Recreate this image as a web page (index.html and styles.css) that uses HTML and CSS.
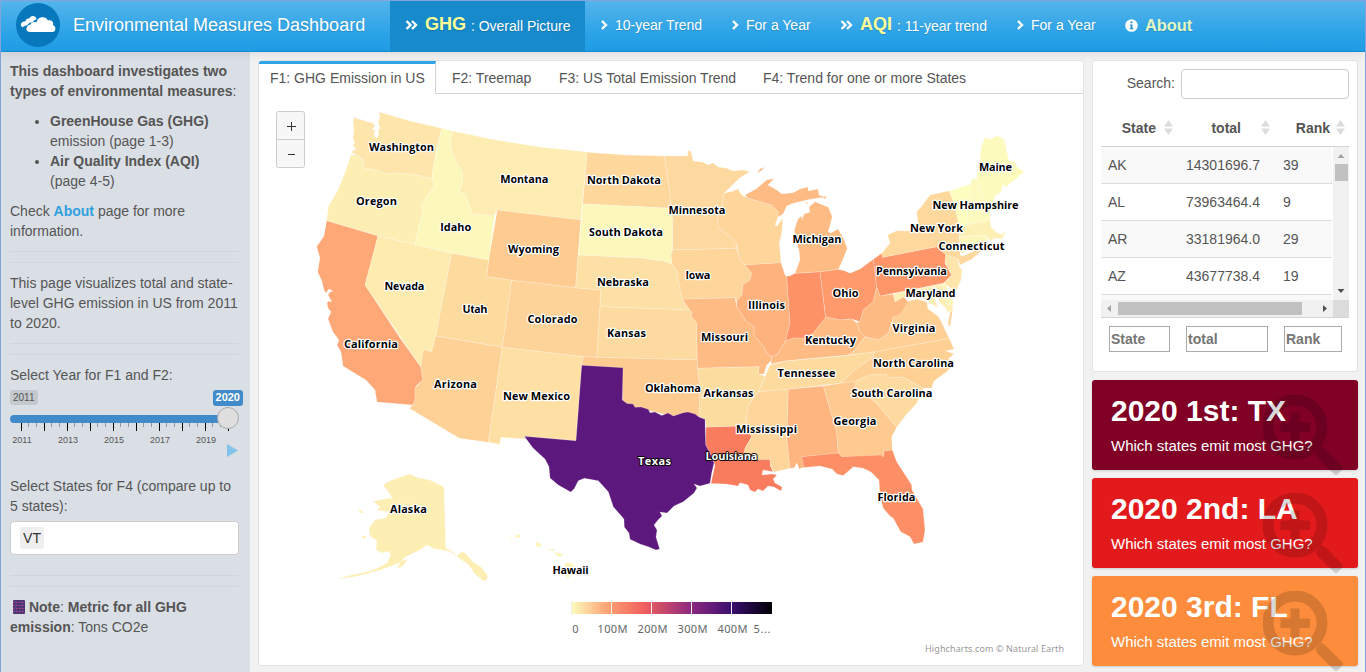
FILE: index.html
```html
<!DOCTYPE html>
<html lang="en">
<head>
<meta charset="utf-8">
<title>Environmental Measures Dashboard</title>
<link rel="stylesheet" href="styles.css">
</head>
<body>
<svg class="defs" width="0" height="0">
  <symbol id="chev" viewBox="0 0 8 10"><path d="M2 1l4 4-4 4" fill="none" stroke="#fff" stroke-width="2.4"/></symbol>
  <symbol id="dchev" viewBox="0 0 13 10"><path d="M1.500 1l4 4-4 4M7 1l4 4-4 4" fill="none" stroke="#fff" stroke-width="2.4"/></symbol>
  <symbol id="magnify" viewBox="0 0 80 80"><circle cx="32" cy="32" r="27" fill="none" stroke="#000" stroke-width="11"/><path d="M27.500 17.500h9V27.500H47v9.500H36.500V47h-9V37H17.500V27.500h10z"/><path d="M53 58l5-6.500q3 1 5 3.500l16 16q2 2 0 4l-4 4q-2 2-4 0L55 63q-2-2-2-5z"/></symbol>
  <symbol id="sort" viewBox="0 0 9 15"><path d="M4.500 0L9 6.500H0zM0 8.500h9L4.500 15z" fill="#dcdcdc"/></symbol>
</svg>
<header class="navbar">
  <svg class="logo" width="44" height="44" viewBox="0 0 44 44"><circle cx="22" cy="22" r="22" fill="#0878bd"/><path d="M6.500 24.300C3.500 22.500 4.500 18.500 9.500 18.300 10 16 11.500 15.200 13.200 15.700 14.500 12 20 12.300 20.500 16.300 18.500 17 17.500 18 17 19.300 14 19.300 12.500 20.300 11.500 22 10 22.500 8 23 6.500 24.300Z" fill="#fff"/><path d="M13.500 29C9 28.500 9.500 22.500 14.500 21.500 15.500 19 18.500 18.500 20.500 19.500 21.500 13 30 12.500 32 17.500 35.500 16.500 38 19 37 22 40.500 23.500 40 28.500 37 29Z" fill="#fff"/></svg>
  <div class="title">Environmental Measures Dashboard</div>
  <nav class="nav">
    <a class="item active w1"><svg width="13" height="10"><use href="#dchev"/></svg><span><b class="big">GHG</b> <span class="sub">: Overall Picture</span></span></a>
    <a class="item w2"><svg width="8" height="10"><use href="#chev"/></svg><span>10-year Trend</span></a>
    <a class="item w3"><svg width="8" height="10"><use href="#chev"/></svg><span>For a Year</span></a>
    <a class="item w4"><svg width="13" height="10"><use href="#dchev"/></svg><span><b class="big">AQI</b> <span class="sub">: 11-year trend</span></span></a>
    <a class="item w3"><svg width="8" height="10"><use href="#chev"/></svg><span>For a Year</span></a>
    <a class="item w5"><svg width="13" height="13" viewBox="0 0 13 13"><circle cx="6.500" cy="6.500" r="6.300" fill="#fff"/><path d="M5.500 2.500h2v1.700h-2zM4.800 5.400h2.700v3.700h.8v1.200H4.800V9.100h.8V6.500h-.8z" fill="#2a8fd0"/></svg><b class="about">About</b></a>
  </nav>
</header>
<div class="body">
  <aside class="sidebar">
    <p><b>This dashboard investigates two types of environmental measures</b>:</p>
    <ul><li><b>GreenHouse Gas (GHG)</b><br>emission (page 1-3)</li><li><b>Air Quality Index (AQI)</b><br>(page 4-5)</li></ul>
    <p class="check">Check <b class="link">About</b> page for more information.</p>
    <div class="rule r1"></div><div class="rule r2"></div>
    <p>This page visualizes total and state-level GHG emission in US from 2011 to 2020.</p>
    <div class="rule r3"></div><div class="rule r2"></div>
    <p class="lbl">Select Year for F1 and F2:</p>
    <div class="badges"><span class="min">2011</span><span class="cur">2020</span></div>
    <svg class="slider" width="239" height="56" viewBox="10 407 239 56">
      <rect x="10" y="415" width="218" height="8" rx="4" fill="#428bca"/>
      <path d="M21.500 423v8M44.500 423v8M67.500 423v8M90.500 423v8M113.500 423v8M136.500 423v8M159.500 423v8M182.500 423v8M205.500 423v8M228.500 423v8" stroke="#000"/>
      <path d="M28.500 423v4M36.500 423v4M51.500 423v4M59.500 423v4M74.500 423v4M82.500 423v4M97.500 423v4M105.500 423v4M120.500 423v4M128.500 423v4M143.500 423v4M151.500 423v4M166.500 423v4M174.500 423v4M189.500 423v4M197.500 423v4M212.500 423v4M220.500 423v4" stroke="#999"/>
      <g class="ticks"><text x="22" y="443">2011</text><text x="68" y="443">2013</text><text x="114" y="443">2015</text><text x="160" y="443">2017</text><text x="206" y="443">2019</text></g>
      <circle cx="228" cy="418" r="10.500" fill="#dedede" stroke="#aaa"/>
      <path d="M227 444l11 6.500-11 6.500z" fill="#82c2eb"/>
    </svg>
    <p class="states">Select States for F4 (compare up to 5 states):</p>
    <div class="select"><span>VT</span></div>
    <div class="rule r4"></div><div class="rule r2"></div>
    <p class="note"><svg width="13" height="14" viewBox="0 0 13 14"><rect x="1" width="12" height="14" rx="1" fill="#51346f"/><path d="M1 2.500h12M1 5.500h12M1 8.500h12M1 11.500h12" stroke="#b44a93" stroke-dasharray="1.500 1.500"/><path d="M3.500 1v12M9.500 1v12" stroke="#4b57a8" stroke-dasharray="1 2"/></svg> <b>Note</b>: <b>Metric for all GHG emission</b>: Tons CO2e</p>
  </aside>
  <main class="card chart">
    <div class="tabs"><div class="tab on">F1: GHG Emission in US</div><div class="tab t2">F2: Treemap</div><div class="tab t3">F3: US Total Emission Trend</div><div class="tab t4">F4: Trend for one or more States</div></div>
    <svg class="map" width="824" height="571" viewBox="259 94 824 571">
      <defs><linearGradient id="magma"><stop offset="0" stop-color="#fcfdbf"/><stop offset=".18" stop-color="#fea473"/><stop offset=".36" stop-color="#f1605d"/><stop offset=".6" stop-color="#8c2981"/><stop offset=".8" stop-color="#3b0f70"/><stop offset="1" stop-color="#000004"/></linearGradient></defs>
      <g class="land">
        <path fill="#fee5ac" d="M354 117L358 119 363 120 368 122 373 123 375 126 372 129 375 130 374 136 377 138 379 134 378 131 380 128 378 122 380 117 379 112 410 121 441.700 128.300 436 153 433 169 432 179 421 176 410 174 395 173 387 174 380 171.500 370 169 364 168 363 160 357 155 352 153 353 150 356 150 353 145 355 143 353 139 354 130 353 122Z"/>
        <path fill="#fdefb4" d="M351 155L357 155 363 160 364 168 370 169 380 171.500 387 174 395 173 410 174 421 176 432 179 435 185 428 195 422 205 423 210 415 244.500 378 236 326.700 220.700 328 207 338 190 345 173Z"/>
        <path fill="#fda876" d="M326.700 220.700L378 236 365 285 400 338 420.700 366.700 423 380 417 385 415 388 415 400 413 405 377 402 375 390 366 380 356 374 343 366 341 352 337 345 339 340 333 332 328 319 331 312 328 308 327 303 329 301 332 302 328 295 330 292 333 291 329 289 326 293 324 290 322 281 317.700 272 320 258 316.700 246.700 324 236Z"/>
        <path fill="#feebb0" d="M378 236L415 244.500 451.700 253.300 435.700 336 431.700 351.700 423.500 349.500 422.500 358 420.700 366.700 365 285Z"/>
        <path fill="#fcf8bc" d="M441.700 128.300L452.700 131 450 143 453 155 458 165 463 173 463 182 459 193 465 193 469 204 473 215 483 214 492 216 495 213 488.700 260 451.700 253.300 415 244.500 423 210 422 205 428 195 435 185 432 179 433 169Z"/>
        <path fill="#fdedb2" d="M452.700 131L493 139.500 540 147 587.300 152 580.700 220 497.300 210 495 214 492 216 483 214 473 215 469 204 465 193 459 193 463 182 463 173 458 165 453 155 450 143Z"/>
        <path fill="#fecb91" d="M497.300 210L580.700 220 575.700 287.700 511.700 280.300 486.700 276.700 488.700 260Z"/>
        <path fill="#fddb9f" d="M451.700 253.300L488.700 260 486.700 276.700 511.700 280.300 502.300 347.300 435.700 336Z"/>
        <path fill="#fed399" d="M511.700 280.300L575.700 287.700 600.700 290 600 306.700 596.700 357.300 583.300 356.700 502.300 347.300Z"/>
        <path fill="#fed196" d="M435.700 336L502.300 347.300 488.300 442.300 459.300 438.300 409.300 408.300 413 405 415 400 415 388 423 380 420.700 366.700 423.500 349.500 431.700 351.700Z"/>
        <path fill="#fee0a5" d="M502.300 347.300L583.300 356.700 581.700 365.300 576 440.700 524.300 436.300 525 439 501 437.300 499.700 444.300 488.300 442.300Z"/>
        <path fill="#fed79c" d="M587.300 152.300L625 155 664.300 156 668 180 670 193 671 208.300 582.700 204Z"/>
        <path fill="#fcf8bb" d="M582.700 204L671 208.300 670 213 672.700 218 672.700 250 671 255 672 264.300 663 260.700 653 260 645 258.300 578.300 255Z"/>
        <path fill="#fde0a5" d="M578.300 255L645 258.300 653 260 663 260.700 672 264.300 676.700 270 679.300 286.700 682.300 299.300 690 310 600 306.700 600.700 290 575.700 287.700Z"/>
        <path fill="#fddba0" d="M600 306.700L690 310 692 313 691 316 696.700 323.300 697.300 360 596.700 357.300Z"/>
        <path fill="#fecb91" d="M583.300 356.700L596.700 357.300 697.300 360 697.700 368.300 700 390 699 416.700 690 413 673 416 623 405 622 369 581.700 365.300Z"/>
        <path fill="#fdd99f" d="M664.300 156L687.700 156 687.700 150 691 152 693.300 161 703.300 162.300 708 165 713.300 163 718 167 726.700 168.300 733.300 171 743 170 750 171.500 740 177.700 724 193.300 722.300 206.700 717.300 213.300 718.300 228.300 730 236 736.700 243.300 736.700 248.300 672.700 250 672.700 218 670 213 671 208.300 670 193 668 180Z"/>
        <path fill="#fed59b" d="M724 193.300L733.300 191 738 189 741.700 195 748.300 198.300 771.700 205 778.300 211.700 778 217 775 225 777 226 783 218 781.700 233.300 779.300 243.300 781 262.700 745 265 740 260 738 252 736.700 243.300 730 236 718.300 228.300 717.300 213.300 722.300 206.700Z"/>
        <path fill="#fed59b" d="M672.700 250L736.700 248.300 740 260 745 265 751.700 273.300 750 280 742.700 285 742 295 736.700 300.700 735 297.700 682.300 299.300 679.300 286.700 676.700 270 672 264.300 671 255Z"/>
        <path fill="#febb84" d="M682.300 299.300L735 297.700 736.700 306.700 746.700 321.700 754.300 326.700 754 335 765 348.300 766.700 353 771.700 356.700 771 361 766.700 365 764 374 758.300 374 759 366.700 697.700 368.300 697.300 360 696.700 323.300 691 316 692 313Z"/>
        <path fill="#feb27d" d="M745 265L781 262.700 785 275 786.700 276.500 790 323.300 785.700 340.700 780 350 778 354 771.700 356.700 766.700 353 765 348.300 754 335 754.300 326.700 746.700 321.700 736.700 306.700 736.700 300.700 742 295 742.700 285 750 280 751.700 273.300Z"/>
        <path fill="#fe9267" d="M786.700 276L790 276 795 273.300 820 271.700 825.700 318 818.300 326.700 813.300 333.300 803.300 338.300 794 338 785.700 340.700 790 323.300Z"/>
        <path fill="#fe9a6c" d="M820 271.700L838.300 269.300 845 271 850 273.300 860 269 873.300 259.300 876.700 286.700 873.300 301.700 863.300 310 860 321.700 851.700 319 840 320 825.700 317Z"/>
        <path fill="#febb84" d="M795 273.300L800 260 799 250 796.700 243.300 794.300 230 798 219 801.700 216 802 220 804 214 810 212 809 207 815 201.700 828.300 207.300 832.300 216.700 830 225 828 232 831 233 838 229 843.300 238.300 847.300 248.300 842.700 260 838.300 269.300 820 271.700ZM745 195L756 189 766.700 180 774 178.500 768 185 776.700 190 782 194 793 192.700 800 189 808 187 808 191 818 189 819 195 825 197 810 199.300 793 203.300 786.700 206 783 214 778 217 778.300 211.700 771.700 205 748.300 198.300ZM757 173L760 169 765 167 761 171ZM823 197l3-1v3l-3-1zM806 202l2 1-2 1z"/>
        <path fill="#febb84" d="M785.700 340.700L794 338 803.300 338.300 813.300 333.300 818.300 326.700 825.700 317 840 320 851.700 319 856.700 322.700 860 331.700 865 336.700 853.300 351.700 848.300 355 786.700 360.700 771 364 771.700 356.700 778 354 780 350Z"/>
        <path fill="#fddb9f" d="M770 365L786.700 361 845 355.700 875 351.700 871.700 358.300 855 370 840 383.300 788.300 389.300 758.300 391.700 765 376.700Z"/>
        <path fill="#fddc9f" d="M697.700 368.300L759 366.700 758.300 374 765 376 758.300 391.700 748.300 405 746.700 416.700 746 426 706.700 427.300 705 419.300 699 416.700 700 390Z"/>
        <path fill="#f97c5f" d="M706 427.300L746 426 751.700 436.700 745 448.300 743.300 459.300 770 459.300 770.700 466.700 773 471.700 763 470 762 475 772 474 777 475 773 479 775 483 782 487 781 491 774 487 768 486 763 491 758 489 755 492 750 490 748 485 740 482.700 738 486 726 484 711 483.500 715 465 710 453 705.700 445Z"/>
        <path fill="#fed69c" d="M758.300 391.700L788.300 389.300 787 440 790 468.300 774 472 770.700 466.700 770 459.300 743.300 459.300 745 448.300 751.700 436.700 746 426 746.700 416.700 748.300 405Z"/>
        <path fill="#feb57f" d="M788.300 389.300L823.300 386 836.700 431.700 838.300 453.300 801.700 456.700 805 466.700 799 469 797 463 794 468 790 468.300 787 440Z"/>
        <path fill="#feca8f" d="M823.300 386L840 383.300 856.700 380.700 855 386 876.700 403.300 896.700 427.300 891.700 436.700 892.300 450 884.300 451 883.300 457.300 841.700 456.700 838.300 453.300 836.700 431.700Z"/>
        <path fill="#fd8f67" d="M801.700 456.700L838.300 453 841.700 456.700 881.700 455 883.300 457.300 884.300 451 892.300 450 896.700 461.700 911.700 485 912 490 923 509 925 530 923 542 914 544 910 536.700 900.700 531.700 893.300 518.300 890 516 883.300 508.300 880 496.700 879 480 871 472 863.300 468.300 853.300 466.700 843.300 475.500 837 474 832 469 820 466 804 467.500Z"/>
        <path fill="#fddba0" d="M855 386L856 381 868.300 375 885 374 890 377.700 903.300 377.300 923.300 388.300 916.700 403.300 906 415 896.700 427.300 876.700 403.300Z"/>
        <path fill="#fed094" d="M875 351.700L949.300 338.300 954 349 946 351 954 354 948 359 955 361 951 367 946.700 371.700 934 381 931.700 387.700 923.300 388.300 903.300 377.300 890 377.700 885 374 868.300 375 856 381 840 383.300 855 370 871.700 358.300Z"/>
        <path fill="#fed096" d="M848.300 355L853.300 351.700 865 336.700 870 338.300 878.300 340 888.300 333.300 893.300 316.700 906.700 301.700 916.700 299 926.700 301.700 928 309 938 316 942 323 946 332 949.300 338.300 875 351.700ZM950 313l3-5-3 19-2-3z"/>
        <path fill="#feba83" d="M876.700 286.700L880 296 893.300 294 895 301.700 903.300 296.700 908.300 301.700 900 315 893.300 316.700 888.300 333.300 878.300 340 865 336.700 860 331.700 856.700 322.700 860 321.700 863.300 310 873.300 301.700Z"/>
        <path fill="#fe9669" d="M873.300 259.300L881.700 253.300 882.700 257.300 936.700 246.700 946 255 945 263.300 951.700 275 943.300 283.300 880 296 876.700 286.700Z"/>
        <path fill="#fed89d" d="M881.700 253.300L890 243.300 887.700 235 896.700 230.700 908 231 918.300 226 916.700 211.700 921 207 930 195 949.300 190.700 955 206.700 959 223.300 959.300 236.700 960 255 963 256 974 251 982 250 972 259 960 265 958.300 259 946 255 936.700 246.700 882.700 257.300Z"/>
        <path fill="#fdfdbf" d="M949.300 190.700L970.700 184.300 971 195 968 208 967 225 959 226 955 206.700Z"/>
        <path fill="#fcfabe" d="M970.700 184.300L972 179 976.700 179 983 200 990 210 990 220 967 225 968 208 971 195Z"/>
        <path fill="#fcfabd" d="M976.700 179L980 160 981 147 985 137.300 990 139.500 997.300 135.700 1004 139.300 1009 161 1015 161.700 1017 167 1024 171.700 1016 179 1010 183 1007 187 1003 185 1001 192 995 196 989 210 983 200Z"/>
        <path fill="#fdf0b5" d="M959 226L967 225 990 220 991 227 996 232 1003 235 1002 230 1005 234 1002 239 996 238 990 241 986 235 959.300 236.700Z"/>
        <path fill="#fcf6ba" d="M959.300 236.700L986 235 988 241 982 243 970 249 961 254Z"/>
        <path fill="#fee5ac" d="M946 255L958.300 259 959 266 962 270 961 280 956 291 952 289 944 283 951.700 275 945 263.300Z"/>
        <path fill="#fcf6ba" d="M942 284L946 283 948 292 954 304 947 305Z"/>
        <path fill="#fdefb4" d="M893.300 294L942 284 947 305 953 304 952 311 948 312 944 306 939 302 939 291 935 287 933 295 938 308 930 303 925 299 916.700 297 909 297 903.300 296.700 895 301.700Z"/>
        <path fill="#fdeeb3" d="M383 485L388 481.700 397 478 410 474 417 477.500 430 480 444 487 445.700 548 453 552 457 556 462 551 466 554 473 562 481 567 488 576 486 581 482 580 475 574 468 564 460 559 451 552 443 550 435 549 427 545 418 551 405 557 401 562 394 565 380 570 366 574 353 577 337 579 351 575 362 573 376 569 387 563 391 554 387 551 383 553 376 550 377 541 370 536 369 528 375 520 386 518 389 512 377 510 380 507 373 501 391 498 393 501 390 494ZM397 568l4-7 7-2-6 8zM357 508l8 5-4 0zM361 536l5 0-2 3z"/>
        <path fill="#fdf4b8" d="M509 538l3-1-2 2zM515 536l4-2 2 3-5 1zM535 543l3-1 4 4-5 1zM547 549l8 0-2 2zM555 552l8 2-3 3-4-2zM565 563l6 0 6 5-9 10-4-4z"/>
        <path fill="#5c187c" d="M581.700 365.300L623 367.700 622.300 400 627 403.500 633 404 635 407.300 641 407 648.300 409.300 650 412.700 655 412 661.700 415.500 668 413 673.300 416 683.300 412.700 688 412 695 414 699 417 705 419.300 705.700 445 710 453 714 463 711.700 473 710 483.300 700 486 694 484 697 488 694 493 683.300 501.700 674 506 667 513 660 512 662 516 658 520 654 525 657 530 656 537 659.700 549 656 550 648.300 546.700 640 544 630 539.300 629 533 624.300 527 624 519 613.300 506.700 608.300 491.700 598.300 480.700 584.300 478.300 578.300 480.700 574 489 570.700 492 558.300 485 550 478 549 466.700 545 459 533 448 524.300 436.300 576 440.700Z"/>
      </g>
      <g class="names">
        <text x="401.500" y="151" textLength="65">Washington</text><text x="376.500" y="205" textLength="41">Oregon</text><text x="455.700" y="231" textLength="31">Idaho</text><text x="524.300" y="183" textLength="48">Montana</text><text x="533.500" y="253" textLength="51">Wyoming</text><text x="404.500" y="290" textLength="40">Nevada</text><text x="475" y="313" textLength="25">Utah</text><text x="552.500" y="323" textLength="50">Colorado</text><text x="371" y="348" textLength="54">California</text><text x="624" y="184" textLength="74">North Dakota</text><text x="697" y="214" textLength="57">Minnesota</text><text x="626" y="236" textLength="74">South Dakota</text><text x="698" y="279" textLength="25">Iowa</text><text x="623" y="286" textLength="52">Nebraska</text><text x="626.500" y="337" textLength="39">Kansas</text><text x="724.500" y="341" textLength="47">Missouri</text><text x="766.500" y="309" textLength="37">Illinois</text><text x="673" y="392" textLength="56">Oklahoma</text><text x="455.500" y="388" textLength="43">Arizona</text><text x="536.500" y="400" textLength="67">New Mexico</text><text x="408.500" y="513" textLength="37">Alaska</text><text x="570.500" y="574" textLength="36">Hawaii</text><text x="766.500" y="433" textLength="61">Mississippi</text><text x="728.500" y="397" textLength="50">Arkansas</text><text x="806.500" y="377" textLength="58">Tennessee</text><text x="855" y="425" textLength="43">Georgia</text><text x="896.500" y="501" textLength="38">Florida</text><text x="892" y="397" textLength="81">South Carolina</text><text x="913.500" y="367" textLength="81">North Carolina</text><text x="830.500" y="344" textLength="51">Kentucky</text><text x="914" y="332" textLength="43">Virginia</text><text x="930.500" y="297" textLength="50">Maryland</text><text x="911.500" y="275" textLength="71">Pennsylvania</text><text x="845.500" y="297" textLength="26">Ohio</text><text x="817" y="243" textLength="49">Michigan</text><text x="936.500" y="232" textLength="53">New York</text><text x="975.500" y="209" textLength="86">New Hampshire</text><text x="971.500" y="250" textLength="66">Connecticut</text><text x="995.500" y="171" textLength="33">Maine</text>
        <text class="inv" x="654.500" y="465" textLength="33">Texas</text><text class="inv" x="731.500" y="460" textLength="52">Louisiana</text>
      </g>
      <rect x="571" y="602" width="201" height="12" fill="url(#magma)"/>
      <path d="M571.500 602v12M611.500 602v12M651.500 602v12M691.500 602v12M731.500 602v12" stroke="#eee"/>
      <g class="axis"><text x="575.500" y="633">0</text><text x="612.500" y="633" textLength="30">100M</text><text x="652.500" y="633" textLength="30">200M</text><text x="692.500" y="633" textLength="30">300M</text><text x="732.500" y="633" textLength="30">400M</text><text x="762" y="633" textLength="17">5...</text></g>
      <text class="credit" x="1064" y="652" textLength="139">Highcharts.com © Natural Earth</text>
      <g class="zoom"><rect x="276.500" y="111.500" width="28" height="56" rx="2"/><path d="M276.500 139.500h28"/><path class="sign" d="M287 126.500h9M291.500 122v9M288 154.500h7"/></g>
    </svg>
  </main>
  <aside class="right">
    <section class="card table">
      <label class="search">Search:<span class="input"></span></label>
      <div class="row head"><b>State</b><svg width="9" height="15"><use href="#sort"/></svg><b>total</b><svg width="9" height="15"><use href="#sort"/></svg><b>Rank</b><svg width="9" height="15"><use href="#sort"/></svg></div>
      <div class="scroller">
        <div class="rows"><div class="row"><span>AK</span><span>14301696.7</span><span>39</span></div><div class="row"><span>AL</span><span>73963464.4</span><span>9</span></div><div class="row"><span>AR</span><span>33181964.0</span><span>29</span></div><div class="row"><span>AZ</span><span>43677738.4</span><span>19</span></div><div class="row"></div></div>
        <svg width="16" height="153" viewBox="0 0 16 153"><path d="M0 0h16v153H0z" fill="#f1f1f1"/><path d="M2 17h13v17H2z" fill="#c1c1c1"/><path d="M4.500 11h7L8 7z" fill="#a3a3a3"/><path d="M4.500 142h7L8 146z" fill="#505050"/></svg>
      </div>
      <svg class="hbar" width="248" height="18" viewBox="0 0 248 18"><path d="M0 0h232v17H0z" fill="#f1f1f1"/><path d="M232 0h16v18h-16z" fill="#dcdcdc"/><path d="M17 2h184v13H17z" fill="#c1c1c1"/><path d="M0 17h248v1H0z" fill="#d4d4d4"/><path d="M10 5v7L6 8.500z" fill="#a3a3a3"/><path d="M222 5v7l4-3.500z" fill="#505050"/></svg>
      <div class="filters"><b class="f1">State</b><b class="f2">total</b><b class="f3">Rank</b></div>
    </section>
    <section class="box maroon"><h2>2020 1st: TX</h2><p>Which states emit most GHG?</p><svg class="mag" width="80" height="80"><use href="#magnify"/></svg></section>
    <section class="box red"><h2>2020 2nd: LA</h2><p>Which states emit most GHG?</p><svg class="mag" width="80" height="80"><use href="#magnify"/></svg></section>
    <section class="box orange"><h2>2020 3rd: FL</h2><p>Which states emit most GHG?</p><svg class="mag" width="80" height="80"><use href="#magnify"/></svg></section>
  </aside>
</div>
</body>
</html>
```
FILE: styles.css
```css
* { box-sizing: border-box; }
body { margin: 0; width: 1366px; height: 672px; overflow: hidden; border: 1px solid #82a3dc; border-bottom: 0; background: #f1f1f1; color: #555; font: 14px/20px "Liberation Sans", Arial, sans-serif; display: flex; flex-direction: column; }
.defs { display: none; }
p, h2, ul { margin: 0; }
svg { display: block; flex: none; }
.navbar { height: 51px; flex: none; display: flex; background: linear-gradient(#54b4eb, #2fa4e7 60%, #1d9ce5); border-bottom: 1px solid #178acc; box-shadow: 0 1px 10px rgba(0,0,0,.1); color: #fff; position: relative; text-shadow: 0 1px 1px rgba(0,0,0,.15); }
.logo { margin: 2px 13px 0 15px; }
.title { width: 317px; font-size: 18px; line-height: 48px; white-space: nowrap; }
.nav { display: flex; }
.item { display: flex; align-items: center; padding: 0 15px 3px; white-space: nowrap; gap: 7px; }
.active { background: #178acc; }
.w1 { width: 195px; } .w2 { width: 131px; } .w3 { width: 109px; } .w4 { width: 176px; } .w5 { width: 97px; }
.w5 svg { margin-top: 1px; }
.big { font-size: 18px; color: #ffff99; }
.sub { display: inline-block; transform: translateY(1px); margin-left: 1px; }
.about { font-size: 16.4px; color: #e3f7c3; }
.body { flex: 1; display: flex; min-height: 0; }
.sidebar { width: 249px; background: #dadfe5; padding: 9px 0 0 9px; }
.sidebar p { width: 232px; }
.sidebar ul { margin: 10px 0; padding-left: 40px; }
.link { color: #2f9fe0; }
.rule { width: 229px; border-top: 1px solid #d3d6d8; }
.r1 { margin-top: 10px; } .r2 { margin: 10px 0; } .r3 { margin-top: 10px; }
.lbl { margin-top: 10px; }
.badges { display: flex; justify-content: space-between; width: 233px; margin-top: 5px; height: 17px; font-size: 10px; line-height: 15px; }
.min { background: #c4c9ce; border-radius: 3px; padding: 0 3px; height: 15px; }
.cur { background: #428bca; color: #fff; font-weight: bold; font-size: 11px; border-radius: 3px; padding: 0 3px; height: 16px; }
.ticks { font-size: 9px; fill: #555; text-anchor: middle; }
.states { margin-top: 13px; }
.select { width: 229px; height: 34px; margin-top: 5px; background: #fff; border: 1px solid #ccc; border-radius: 4px; padding: 5px 9px; display: flex; }
.select span { width: 24px; height: 22px; line-height: 22px; text-align: center; color: #333; background: #efefef; border-radius: 3px; }
.r4 { margin-top: 20px; }
.note svg { display: inline-block; vertical-align: -2px; margin-left: 2px; }
.card { background: #fff; border: 1px solid #e2e2e2; border-radius: 3px; }
.chart { width: 826px; height: 606px; margin: 8px 0 0 8px; overflow: hidden; }
.tabs { height: 33px; display: flex; border-bottom: 1px solid #d4d4d4; line-height: 34px; white-space: nowrap; }
.on { width: 177px; height: 33px; border-top: 3px solid #2fa4e7; border-right: 1px solid #d4d4d4; background: #fff; padding-left: 11px; line-height: 28px; }
.t2 { margin-left: 16px; width: 107px; } .t3 { width: 204px; }
.land path { stroke: #fff; stroke-opacity: .25; stroke-width: .8; stroke-linejoin: round; }
.names { font: bold 11px "Open Sans", "Noto Sans", sans-serif; text-anchor: middle; fill: #000; stroke: #fff; stroke-width: 2.4px; paint-order: stroke; stroke-linejoin: round; }
.names .inv { fill: #fff; stroke: #000; stroke-width: 1.8px; }
.axis { font: 11px "Noto Sans", sans-serif; text-anchor: middle; fill: #666; }
.credit { font: 9px "Noto Sans", sans-serif; text-anchor: end; fill: #999; }
.zoom rect { fill: #f7f7f7; stroke: #ccc; } .zoom path { stroke: #ccc; } .zoom .sign { stroke: #333; }
.right { margin: 8px 0 0 7px; width: 268px; }
.table { width: 266px; height: 312px; margin-left: 1px; padding: 8px 8px 0; }
.search { display: flex; justify-content: flex-end; gap: 6px; line-height: 29px; }
.input { width: 168px; height: 30px; border: 1px solid #ccc; border-radius: 4px; }
.head { width: 248px; height: 48px; display: grid; grid-template-columns: 63px 38px 59px 25px 51px 10px; align-items: center; text-align: right; padding-top: 10px; border-bottom: 1px solid #d4d4d4; }
.head b { padding-right: 8px; }
.head b:nth-of-type(2) { padding-right: 0; width: 39px; }
.head b:nth-of-type(3) { padding-right: 7px; }
.head svg:nth-of-type(3) { margin-left: -1px; }
.scroller { height: 153px; width: 248px; display: flex; justify-content: space-between; overflow: hidden; }
.rows { width: 231px; }
.rows .row { height: 37px; border-bottom: 1px solid #ddd; display: grid; grid-template-columns: 78px 97px 48px; padding-left: 7px; line-height: 37px; }
.rows .row:nth-child(odd) { background: #f9f9f9; }
.filters { display: flex; margin: 8px 0 0 8px; }
.filters b { height: 26px; border: 1px solid #aaa; color: #757575; line-height: 24px; padding-left: 1px; }
.f1 { width: 61px; margin-right: 16px; } .f2 { width: 82px; margin-right: 16px; } .f3 { width: 58px; }
.box { width: 266px; height: 90px; margin: 8px 0 0 1px; border-radius: 3px; color: #fff; padding: 12px 19px; position: relative; font-size: 15px; box-shadow: 0 1px 2px rgba(0,0,0,.15); }
.box h2 { font-size: 30px; line-height: 38px; white-space: nowrap; }
.box p { margin-top: 6px; white-space: nowrap; }
.mag { position: absolute; left: 171px; top: 15px; opacity: .15; }
.maroon { background: #800026; } .red { background: #e31a1c; } .orange { background: #fd8d3c; }
```
